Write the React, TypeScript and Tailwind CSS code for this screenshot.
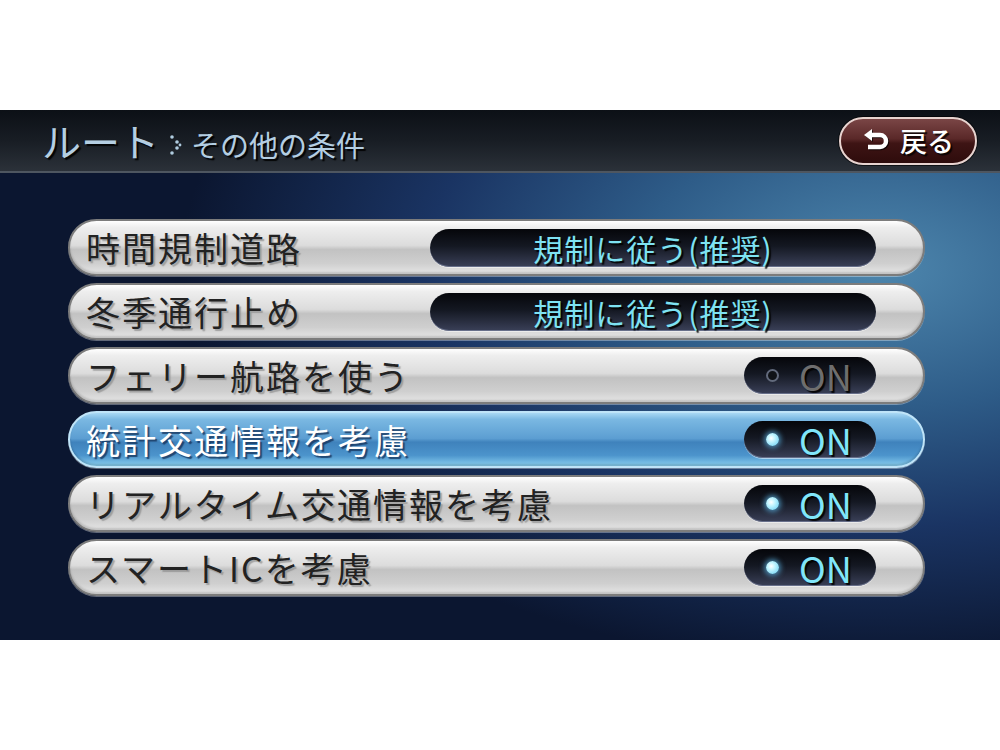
import React from "react";

const JP = "font-['Noto_Sans_CJK_JP','Noto_Sans',sans-serif]";

function BackArrow() {
  return (
    <svg width="30" height="24" viewBox="0 0 30 24" className="drop-shadow-[1px_1px_0_rgba(0,0,0,0.7)]">
      <path d="M9 6 H18 A6 6 0 0 1 18 18 H6" fill="none" stroke="#fff" strokeWidth="4.5" strokeLinecap="butt" />
      <path d="M2 6 L10 0 L10 12 Z" fill="#fff" />
    </svg>
  );
}

function Chevron() {
  return (
    <svg width="14" height="22" viewBox="0 0 14 22" className="ml-[10px] mr-[8px] mt-[8px]">
      <circle cx="3" cy="3" r="1.8" fill="#b0cce0" />
      <circle cx="8" cy="8" r="1.8" fill="#b0cce0" />
      <circle cx="11" cy="11" r="1.4" fill="#b0cce0" />
      <circle cx="8" cy="14" r="1.8" fill="#b0cce0" />
      <circle cx="3" cy="19" r="1.8" fill="#b0cce0" />
    </svg>
  );
}

type Row = { label: string; kind: "select" | "on" | "off"; value?: string; active?: boolean };

const rows: Row[] = [
  { label: "時間規制道路", kind: "select", value: "規制に従う(推奨)" },
  { label: "冬季通行止め", kind: "select", value: "規制に従う(推奨)" },
  { label: "フェリー航路を使う", kind: "off" },
  { label: "統計交通情報を考慮", kind: "on", active: true },
  { label: "リアルタイム交通情報を考慮", kind: "on" },
  { label: "スマートICを考慮", kind: "on" },
];

function SelectPill({ value }: { value: string }) {
  return (
    <div className="w-[446px] h-[38px] rounded-full bg-[linear-gradient(180deg,#05060a_0%,#141822_45%,#3a4058_100%)] shadow-[inset_0_-1px_0_rgba(150,160,190,0.5),0_1px_0_rgba(255,255,255,0.5)] flex items-center justify-center">
      <span className={`${JP} text-[30px] leading-none tracking-[1px] text-[#7ee2f2] [text-shadow:2px_2px_1px_rgba(0,0,0,0.9)]`}>
        {value}
      </span>
    </div>
  );
}

function OnPill({ on }: { on: boolean }) {
  return (
    <div className="w-[132px] h-[37px] rounded-full bg-[linear-gradient(180deg,#05060a_0%,#141822_45%,#3a4058_100%)] shadow-[inset_0_-1px_0_rgba(150,160,190,0.5),0_1px_0_rgba(255,255,255,0.5)] flex items-center pl-[22px]">
      {on ? (
        <div className="w-[13px] h-[13px] rounded-full bg-[radial-gradient(circle_at_40%_40%,#ffffff_0%,#bff4ff_35%,#5cc8f0_100%)] shadow-[0_0_5px_2px_rgba(100,200,255,0.6)]" />
      ) : (
        <div className="w-[13px] h-[13px] rounded-full bg-[#101318] border-2 border-[#626a7c]" />
      )}
      <span
        className={`${JP} ml-[20px] text-[36px] leading-none mt-[-2px] ${
          on ? "text-[#80e6fa]" : "text-[#6e6e6e]"
        } [text-shadow:2px_2px_1px_rgba(0,0,0,0.9)]`}
      >
        ON
      </span>
    </div>
  );
}

function RowItem({ row }: { row: Row }) {
  const bg = row.active
    ? "bg-[linear-gradient(180deg,#a8d8f4_0%,#7ab8e2_12%,#5c9ed2_48%,#3f82bc_55%,#4c94cc_80%,#8ad0f0_100%)] border-[#bfe4f8]"
    : "bg-[linear-gradient(180deg,#ffffff_0%,#eeeeee_12%,#dcdcdc_46%,#c2c2c2_54%,#cfcfcf_80%,#e6e6e6_100%)] border-[#7c7c7c]";
  return (
    <div
      className={`h-[57px] rounded-full border-2 ${bg} shadow-[0_1px_0_rgba(255,255,255,0.35),inset_0_-2px_2px_rgba(0,0,0,0.15)] flex items-center justify-between pl-[16px] pr-[47px]`}
    >
      <span
        className={`${JP} text-[34px] leading-none tracking-[2px] font-normal ${
          row.active
            ? "text-white [text-shadow:2px_2px_1px_rgba(20,50,90,0.8)]"
            : "text-[#222222] [text-shadow:2px_2px_1px_rgba(140,140,140,0.7)]"
        }`}
      >
        {row.label}
      </span>
      {row.kind === "select" && <SelectPill value={row.value!} />}
      {row.kind === "on" && <OnPill on />}
      {row.kind === "off" && <OnPill on={false} />}
    </div>
  );
}

export default function App() {
  return (
    <div className="w-[1000px] h-[750px] bg-white flex flex-col">
      <div className="h-[110px]" />
      <div className="h-[530px] flex flex-col bg-[radial-gradient(ellipse_70%_75%_at_88%_30%,#4d86ad_0%,#2e5c88_35%,#1a3463_65%,#0b1630_100%)]">
        <div className="h-[63px] shrink-0 border-b-2 border-[#4e5660] bg-[linear-gradient(180deg,#0c1016_0%,#181d24_50%,#2b3139_100%)] flex items-center justify-between pl-[42px] pr-[23px]">
          <div className="flex items-center">
            <span className={`${JP} text-[39px] leading-none text-[#b4cee2] [text-shadow:2px_2px_1px_rgba(0,0,0,0.9)]`}>
              ルート
            </span>
            <Chevron />
            <span className={`${JP} text-[29px] leading-none mt-[8px] text-[#b4cee2] [text-shadow:2px_2px_1px_rgba(0,0,0,0.9)]`}>
              その他の条件
            </span>
          </div>
          <div className="w-[138px] h-[48px] rounded-full border-2 border-[#e8d4d0] bg-[linear-gradient(180deg,#7a4646_0%,#5a2828_45%,#3e1414_55%,#2e0c0c_100%)] shadow-[0_0_0_1px_rgba(0,0,0,0.6)] flex items-center justify-center gap-[8px]">
            <BackArrow />
            <span className={`${JP} text-[27px] leading-none text-white font-medium [text-shadow:2px_2px_1px_rgba(0,0,0,0.8)]`}>
              戻る
            </span>
          </div>
        </div>
        <div className="flex flex-col gap-[7px] pt-[46px] pl-[68px] pr-[75px]">
          {rows.map((r, i) => (
            <RowItem key={i} row={r} />
          ))}
        </div>
      </div>
    </div>
  );
}
